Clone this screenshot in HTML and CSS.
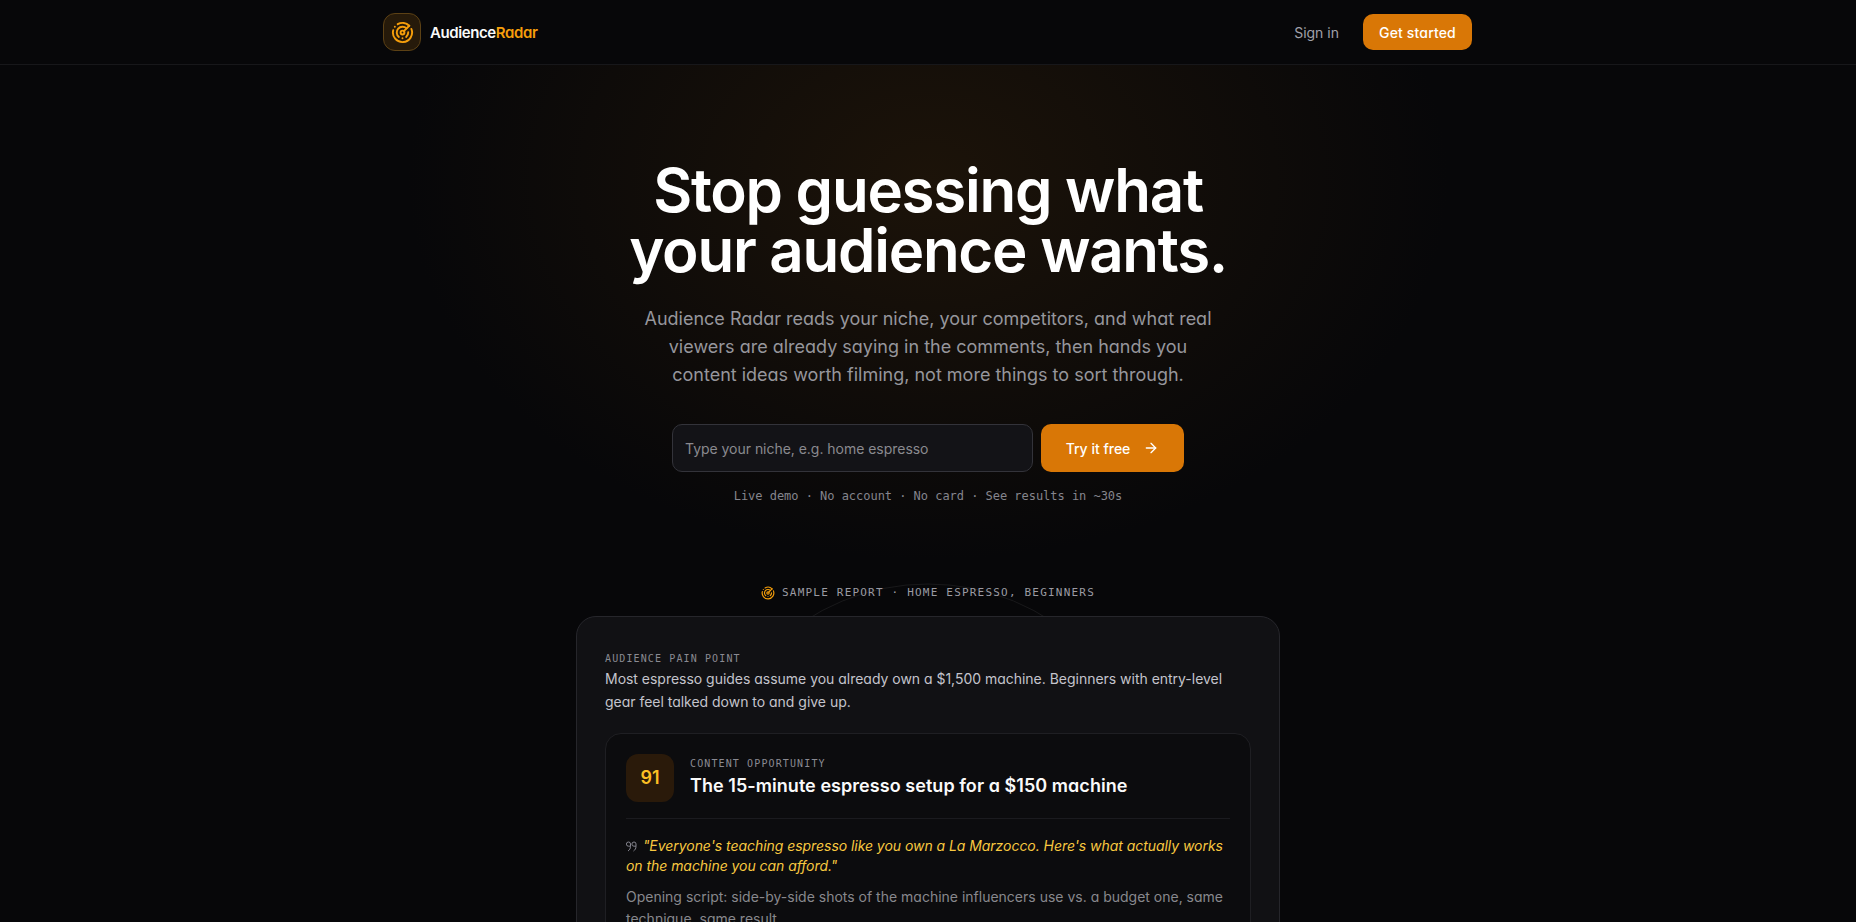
FILE: index.html
```html
<!DOCTYPE html>
<html lang="en">
<head>
    <meta charset="UTF-8">
    <title>AudienceRadar</title>
    <link rel="stylesheet" href="styles.css">
</head>
<body>
    <header class="topbar">
        <div class="topbar-inner">
            <a class="brand" href="#">
                <span class="brand-mark">
                    <svg width="23" height="23" viewBox="0 0 24 24" fill="none" stroke="#f59e0b" stroke-width="2" stroke-linecap="round" stroke-linejoin="round">
                        <path d="M19.07 4.93A10 10 0 0 0 6.99 3.34"/>
                        <path d="M4 6h.01"/>
                        <path d="M2.29 9.62A10 10 0 1 0 21.31 8.35"/>
                        <path d="M16.24 7.76A6 6 0 1 0 8.23 16.67"/>
                        <path d="M12 18h.01"/>
                        <path d="M17.99 11.66A6 6 0 0 1 15.77 16.67"/>
                        <circle cx="12" cy="12" r="2"/>
                        <path d="m13.41 10.59 5.66-5.66"/>
                    </svg>
                </span>
                <span class="brand-name">Audience<span class="brand-accent">Radar</span></span>
            </a>
            <nav class="topnav">
                <a class="signin" href="#">Sign in</a>
                <a class="btn-start" href="#">Get started</a>
            </nav>
        </div>
    </header>

    <main class="hero">
        <svg class="rings" width="460" height="460" viewBox="0 0 460 460" fill="none" stroke="#ffffff" stroke-opacity="0.07">
            <circle cx="230" cy="230" r="224"/>
        </svg>
        <h1>Stop guessing what<br>your audience wants.</h1>
        <p class="lead">Audience Radar reads your niche, your competitors, and what real viewers are already saying in the comments, then hands you content ideas worth filming, not more things to sort through.</p>
        <form class="try-form">
            <input type="text" placeholder="Type your niche, e.g. home espresso">
            <button type="button">Try it free
                <svg width="16" height="16" viewBox="0 0 24 24" fill="none" stroke="currentColor" stroke-width="2" stroke-linecap="round" stroke-linejoin="round"><path d="M5 12h14"/><path d="M12 5l7 7-7 7"/></svg>
            </button>
        </form>
        <p class="fineprint">Live demo · No account · No card · See results in ~30s</p>

        <div class="sample-label">
            <svg width="14" height="14" viewBox="0 0 24 24" fill="none" stroke="#f59e0b" stroke-width="2" stroke-linecap="round" stroke-linejoin="round">
                <path d="M19.07 4.93A10 10 0 0 0 6.99 3.34"/>
                <path d="M4 6h.01"/>
                <path d="M2.29 9.62A10 10 0 1 0 21.31 8.35"/>
                <path d="M16.24 7.76A6 6 0 1 0 8.23 16.67"/>
                <path d="M12 18h.01"/>
                <path d="M17.99 11.66A6 6 0 0 1 15.77 16.67"/>
                <circle cx="12" cy="12" r="2"/>
                <path d="m13.41 10.59 5.66-5.66"/>
            </svg>
            Sample report · home espresso, beginners
        </div>

        <section class="report">
            <div class="eyebrow">Audience pain point</div>
            <p class="pain">Most espresso guides assume you already own a $1,500 machine. Beginners with entry-level gear feel talked down to and give up.</p>
            <div class="idea">
                <div class="idea-head">
                    <div class="score">91</div>
                    <div class="idea-title">
                        <div class="eyebrow">Content opportunity</div>
                        <h3>The 15-minute espresso setup for a $150 machine</h3>
                    </div>
                </div>
                <p class="hook">
                    <svg class="quote-mark" width="11" height="11" viewBox="0 0 11 11" fill="none" stroke="#85858e" stroke-width="1">
                        <path d="M2.5 1a2 2 0 0 1 2 2v2.5c0 2-1 3.500-2.500 4.500M2.500 1a2 2 0 0 0 0 4.200h2"/>
                        <path d="M8 1a2 2 0 0 1 2 2v2.500c0 2-1 3.500-2.500 4.500M8 1a2 2 0 0 0 0 4.200h2"/>
                    </svg>
                    "Everyone's teaching espresso like you own a La Marzocco. Here's what actually works on the machine you can afford."</p>
                <p class="script">Opening script: side-by-side shots of the machine influencers use vs. a budget one, same technique, same result.</p>
            </div>
        </section>
    </main>
</body>
</html>
```

FILE: styles.css
```css
* {
    box-sizing: border-box;
}
html, body {
    height: 100%;
    overflow: hidden;
}
body {
    margin: 0;
    background-color: #070709;
    color: #fff;
    font-family: Inter, "Noto Sans", sans-serif;
    font-feature-settings: "cv11";
}
a {
    text-decoration: none;
}
.topbar {
    height: 65px;
    border-bottom: 1px solid #17171a;
}
.topbar-inner {
    width: 1088px;
    height: 64px;
    margin: 0 auto;
    display: flex;
    align-items: center;
    justify-content: space-between;
}
.brand {
    display: flex;
    align-items: center;
    gap: 9px;
    margin-left: -1px;
}
.brand-mark {
    width: 38px;
    height: 38px;
    border-radius: 12px;
    border: 1px solid #5c4115;
    background-color: #261a0a;
    display: flex;
    align-items: center;
    justify-content: center;
}
.brand-name {
    font-size: 15px;
    font-weight: 600;
    letter-spacing: -0.4px;
    color: #fafafa;
}
.brand-accent {
    color: #f59e0b;
}
.topnav {
    display: flex;
    align-items: center;
    gap: 24px;
}
.signin {
    font-size: 14px;
    color: #a1a1aa;
}
.btn-start {
    width: 109px;
    height: 36px;
    border-radius: 10px;
    background-color: #d97706;
    color: #fff;
    font-size: 14px;
    font-weight: 500;
    letter-spacing: 0.15px;
    display: flex;
    align-items: center;
    justify-content: center;
}
.hero {
    position: relative;
    display: flex;
    flex-direction: column;
    align-items: center;
    padding-top: 95px;
    background: radial-gradient(ellipse 520px 380px at 50% 115px, #1c1309 0%, rgba(7,7,9,0) 100%);
    min-height: 900px;
}
.rings {
    position: absolute;
    left: 50%;
    top: 513px;
    margin-left: -230px;
}
h1 {
    position: relative;
    margin: 0;
    font-size: 60px;
    line-height: 60px;
    font-weight: 600;
    letter-spacing: -1.25px;
    text-align: center;
    color: #fff;
    font-feature-settings: normal;
}
.lead {
    position: relative;
    width: 576px;
    margin: 25px 0 0;
    font-size: 18px;
    line-height: 28px;
    color: #96969c;
    text-align: center;
}
.try-form {
    position: relative;
    display: flex;
    gap: 8px;
    margin-top: 35px;
}
.try-form input {
    width: 361px;
    height: 48px;
    padding: 0 12px;
    border: 1px solid #33333a;
    border-radius: 10px;
    background-color: #131317;
    color: #fff;
    font-family: inherit;
    font-size: 14px;
    letter-spacing: -0.03px;
}
.try-form input::placeholder {
    color: #8a8a8f;
}
.try-form button {
    width: 143px;
    height: 48px;
    border: 0;
    border-radius: 10px;
    background-color: #d97706;
    color: #fff;
    font-family: inherit;
    font-size: 14px;
    font-weight: 500;
    display: flex;
    align-items: center;
    justify-content: center;
    gap: 13px;
}
.fineprint {
    position: relative;
    margin: 16px 0 0;
    font-family: "DejaVu Sans Mono", monospace;
    font-size: 12px;
    line-height: 16px;
    letter-spacing: -0.03px;
    color: #85858d;
}
.sample-label {
    position: relative;
    margin-top: 81px;
    display: flex;
    align-items: center;
    gap: 7px;
    font-family: "DejaVu Sans Mono", monospace;
    font-size: 11px;
    line-height: 16px;
    letter-spacing: 1.2px;
    text-transform: uppercase;
    color: #9b9ba3;
}
.report {
    position: relative;
    width: 704px;
    margin-top: 15px;
    padding: 34px 28px 28px;
    border: 1px solid #26262b;
    border-radius: 20px;
    background-color: #111114;
}
.eyebrow {
    font-family: "DejaVu Sans Mono", monospace;
    font-size: 10px;
    line-height: 16px;
    letter-spacing: 1.12px;
    text-transform: uppercase;
    color: #8a8a92;
}
.pain {
    margin: 1px 0 0;
    font-size: 14px;
    line-height: 22.75px;
    letter-spacing: -0.02px;
    color: #c4c4cc;
}
.idea {
    margin-top: 19px;
    padding: 20px;
    border: 1px solid #1f1f23;
    border-radius: 16px;
    background-color: #0c0c0e;
}
.idea-head {
    display: flex;
    gap: 16px;
    padding-bottom: 16px;
    border-bottom: 1px solid #1b1b1f;
}
.idea-title {
    padding-top: 2px;
}
.score {
    width: 48px;
    height: 48px;
    border-radius: 12px;
    background-color: #2a1a0a;
    color: #fbbf24;
    font-size: 18px;
    font-weight: 600;
    display: flex;
    align-items: center;
    justify-content: center;
}
h3 {
    margin: 1px 0 0;
    font-size: 18px;
    line-height: 26px;
    font-weight: 600;
    letter-spacing: 0.05px;
    color: #fafafa;
}
.hook {
    margin: 17px 0 0;
    font-size: 14px;
    line-height: 20px;
    font-style: italic;
    letter-spacing: -0.05px;
    color: #f8c840;
}
.quote-mark {
    vertical-align: -1px;
    margin-right: 2px;
}
.script {
    margin: 10px 0 0;
    font-size: 14px;
    line-height: 22px;
    color: #88888d;
}
```
